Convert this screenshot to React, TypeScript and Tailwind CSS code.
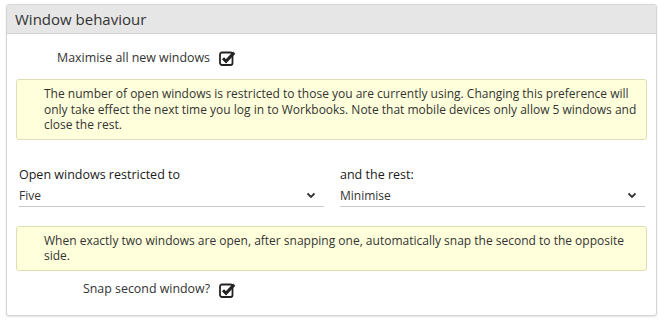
import React from "react";

function CheckIcon() {
  return (
    <svg width="17" height="16" viewBox="0 0 17 16" className="block">
      <rect x="1" y="2.5" width="12.5" height="12.5" rx="2" fill="none" stroke="#222" strokeWidth="1.8" />
      <path d="M4 8.3 L7 11.3 L15.2 2.6" fill="none" stroke="#222" strokeWidth="3" strokeLinecap="butt" strokeLinejoin="miter" />
    </svg>
  );
}

function Chevron() {
  return (
    <svg width="10" height="7" viewBox="0 0 10 7" className="block">
      <path d="M1.5 1.5 L5 5 L8.5 1.5" fill="none" stroke="#333" strokeWidth="1.8" />
    </svg>
  );
}

function CheckRow({ label }: { label: string }) {
  return (
    <div className="flex items-center h-[24px]">
      <div className="w-[194px] text-right text-[12.4px] text-[#333]">{label}</div>
      <div className="ml-[9px]">
        <CheckIcon />
      </div>
    </div>
  );
}

function Note({ children }: { children: React.ReactNode }) {
  return (
    <div className="bg-[#ffffdc] border border-[#deddb4] rounded-[3px] pl-[27px] pr-[2px] py-[6px] text-[12px] leading-[15.5px] text-[#333]">
      {children}
    </div>
  );
}

function SelectBox({ value }: { value: string }) {
  return (
    <div className="flex items-center justify-between h-[22px] border-b border-[#c8c8c8] pr-[8px] pt-[1px] text-[12px] text-[#333]">
      <span>{value}</span>
      <Chevron />
    </div>
  );
}

export default function App() {
  return (
    <div className="min-h-[322px] bg-white pl-[6px] pt-[4px]" style={{ fontFamily: '"Open Sans", "Noto Sans", sans-serif' }}>
      <div className="w-[651px] border border-[#d4d4d4] rounded-[3px] shadow-[0_1px_2px_rgba(0,0,0,0.12)] bg-white overflow-hidden">
        {/* Header */}
        <div className="h-[29px] bg-[#e6e6e6] border-b border-[#d0d0d0] flex items-center pl-[8px] text-[15px] text-[#333]">
          Window behaviour
        </div>

        <div className="px-[9px] pb-[13px]">
          <div className="pt-[12px]">
            <CheckRow label="Maximise all new windows" />
          </div>

          <div className="mt-[9px]">
            <Note>
              The number of open windows is restricted to those you are currently using. Changing this preference will
              only take effect the next time you log in to Workbooks. Note that mobile devices only allow 5 windows and
              close the rest.
            </Note>
          </div>

          {/* Selects */}
          <div className="mt-[26px] flex gap-[16px] pl-[3px]">
            <div className="w-[305px]">
              <div className="text-[12.5px] font-medium text-[#1a1a1a] h-[19px]">Open windows restricted to</div>
              <SelectBox value="Five" />
            </div>
            <div className="w-[305px]">
              <div className="text-[12.5px] font-medium text-[#1a1a1a] h-[19px]">and the rest:</div>
              <SelectBox value="Minimise" />
            </div>
          </div>

          <div className="mt-[19px]">
            <Note>
              When exactly two windows are open, after snapping one, automatically snap the second to the opposite
              side.
            </Note>
          </div>

          <div className="mt-[7px]">
            <CheckRow label="Snap second window?" />
          </div>
        </div>
      </div>
    </div>
  );
}
